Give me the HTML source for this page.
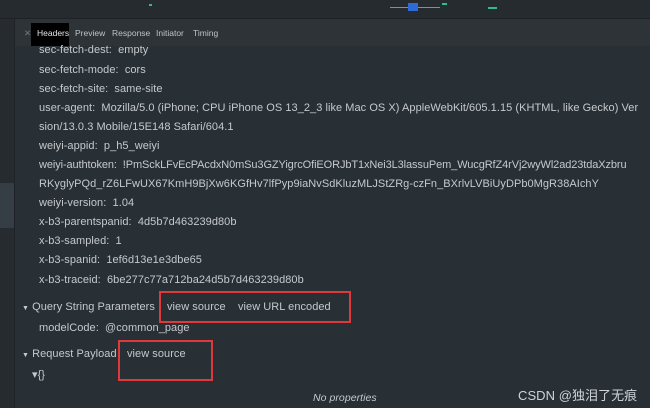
<html><head><style>
body{margin:0;width:650px;height:408px;background:#272c31;overflow:hidden;font-family:"Liberation Sans","Noto Sans CJK SC",sans-serif;position:relative}
.top{position:absolute;left:0;top:0;width:650px;height:18px;background:#262b30;border-bottom:1px solid #1e2226}
.left{position:absolute;left:0;top:19px;width:14px;height:389px;background:#262b30;border-right:1px solid #1f2327}
.main{position:absolute;left:15px;top:19px;width:635px;height:389px;background:#283036}
.tabs{position:absolute;left:15px;top:19px;width:635px;height:27px;background:#2e3338}
.t{position:absolute;top:28px;font-size:8.5px;color:#bfc3c7;white-space:nowrap}
.l{position:absolute;left:39px;font-size:11px;color:#c6c9cc;white-space:nowrap;letter-spacing:0.05px}
.box{position:absolute;border:2px solid #e0393c}
</style></head><body>
<div class="top"></div>
<div style="position:absolute;left:149px;top:4px;width:3px;height:2px;background:#2bbf8a"></div>
<div style="position:absolute;left:390px;top:7px;width:18px;height:1px;background:#2bbf8a"></div>
<div style="position:absolute;left:408px;top:3px;width:10px;height:8px;background:#2f6bd6"></div>
<div style="position:absolute;left:418px;top:7px;width:22px;height:1px;background:#2bbf8a"></div>
<div style="position:absolute;left:442px;top:3px;width:5px;height:2px;background:#2bbf8a"></div>
<div style="position:absolute;left:488px;top:7px;width:9px;height:2px;background:#2bbf8a"></div>
<div class="left"></div>
<div style="position:absolute;left:0;top:183px;width:14px;height:45px;background:#353d45"></div>
<div class="main"></div>
<div class="tabs"></div>
<div style="position:absolute;left:31px;top:23px;width:38px;height:23px;background:#000"></div>
<div class="t" style="left:24px;color:#777">✕</div>
<div class="t" style="left:37px;color:#e6e6e6">Headers</div>
<div class="t" style="left:75px">Preview</div>
<div class="t" style="left:112px">Response</div>
<div class="t" style="left:156px">Initiator</div>
<div class="t" style="left:193px">Timing</div>
<div class="l" style="top:44px">sec-fetch-dest:&nbsp; empty</div>
<div class="l" style="top:64px">sec-fetch-mode:&nbsp; cors</div>
<div class="l" style="top:83px">sec-fetch-site:&nbsp; same-site</div>
<div class="l" style="top:102px">user-agent:&nbsp; Mozilla/5.0 (iPhone; CPU iPhone OS 13_2_3 like Mac OS X) AppleWebKit/605.1.15 (KHTML, like Gecko) Ver</div>
<div class="l" style="top:121px">sion/13.0.3 Mobile/15E148 Safari/604.1</div>
<div class="l" style="top:140px">weiyi-appid:&nbsp; p_h5_weiyi</div>
<div class="l" style="top:159px;letter-spacing:-0.1px">weiyi-authtoken:&nbsp; !PmSckLFvEcPAcdxN0mSu3GZYigrcOfiEORJbT1xNei3L3lassuPem_WucgRfZ4rVj2wyWl2ad23tdaXzbru</div>
<div class="l" style="top:178px">RKyglyPQd_rZ6LFwUX67KmH9BjXw6KGfHv7lfPyp9iaNvSdKluzMLJStZRg-czFn_BXrlvLVBiUyDPb0MgR38AIchY</div>
<div class="l" style="top:197px">weiyi-version:&nbsp; 1.04</div>
<div class="l" style="top:216px">x-b3-parentspanid:&nbsp; 4d5b7d463239d80b</div>
<div class="l" style="top:235px">x-b3-sampled:&nbsp; 1</div>
<div class="l" style="top:254px">x-b3-spanid:&nbsp; 1ef6d13e1e3dbe65</div>
<div class="l" style="top:274px">x-b3-traceid:&nbsp; 6be277c77a712ba24d5b7d463239d80b</div>
<div class="l" style="left:22px;top:301px"><span style="font-size:7px">▼</span> Query String Parameters</div>
<div class="l" style="left:167px;top:301px">view source</div>
<div class="l" style="left:238px;top:301px">view URL encoded</div>
<div class="l" style="top:322px">modelCode:&nbsp; @common_page</div>
<div class="l" style="left:22px;top:348px"><span style="font-size:7px">▼</span> Request Payload</div>
<div class="l" style="left:127px;top:348px">view source</div>
<div class="l" style="left:32px;top:368px">▾{}</div>
<div class="l" style="left:313px;top:392px;font-style:italic;font-size:10.5px">No properties</div>
<div class="l" style="left:518px;top:385px;font-size:13px;color:#d0d3d6">CSDN @独泪了无痕</div>
<div class="box" style="left:159px;top:291px;width:188px;height:28px"></div>
<div class="box" style="left:118px;top:340px;width:91px;height:37px"></div>
</body></html>
